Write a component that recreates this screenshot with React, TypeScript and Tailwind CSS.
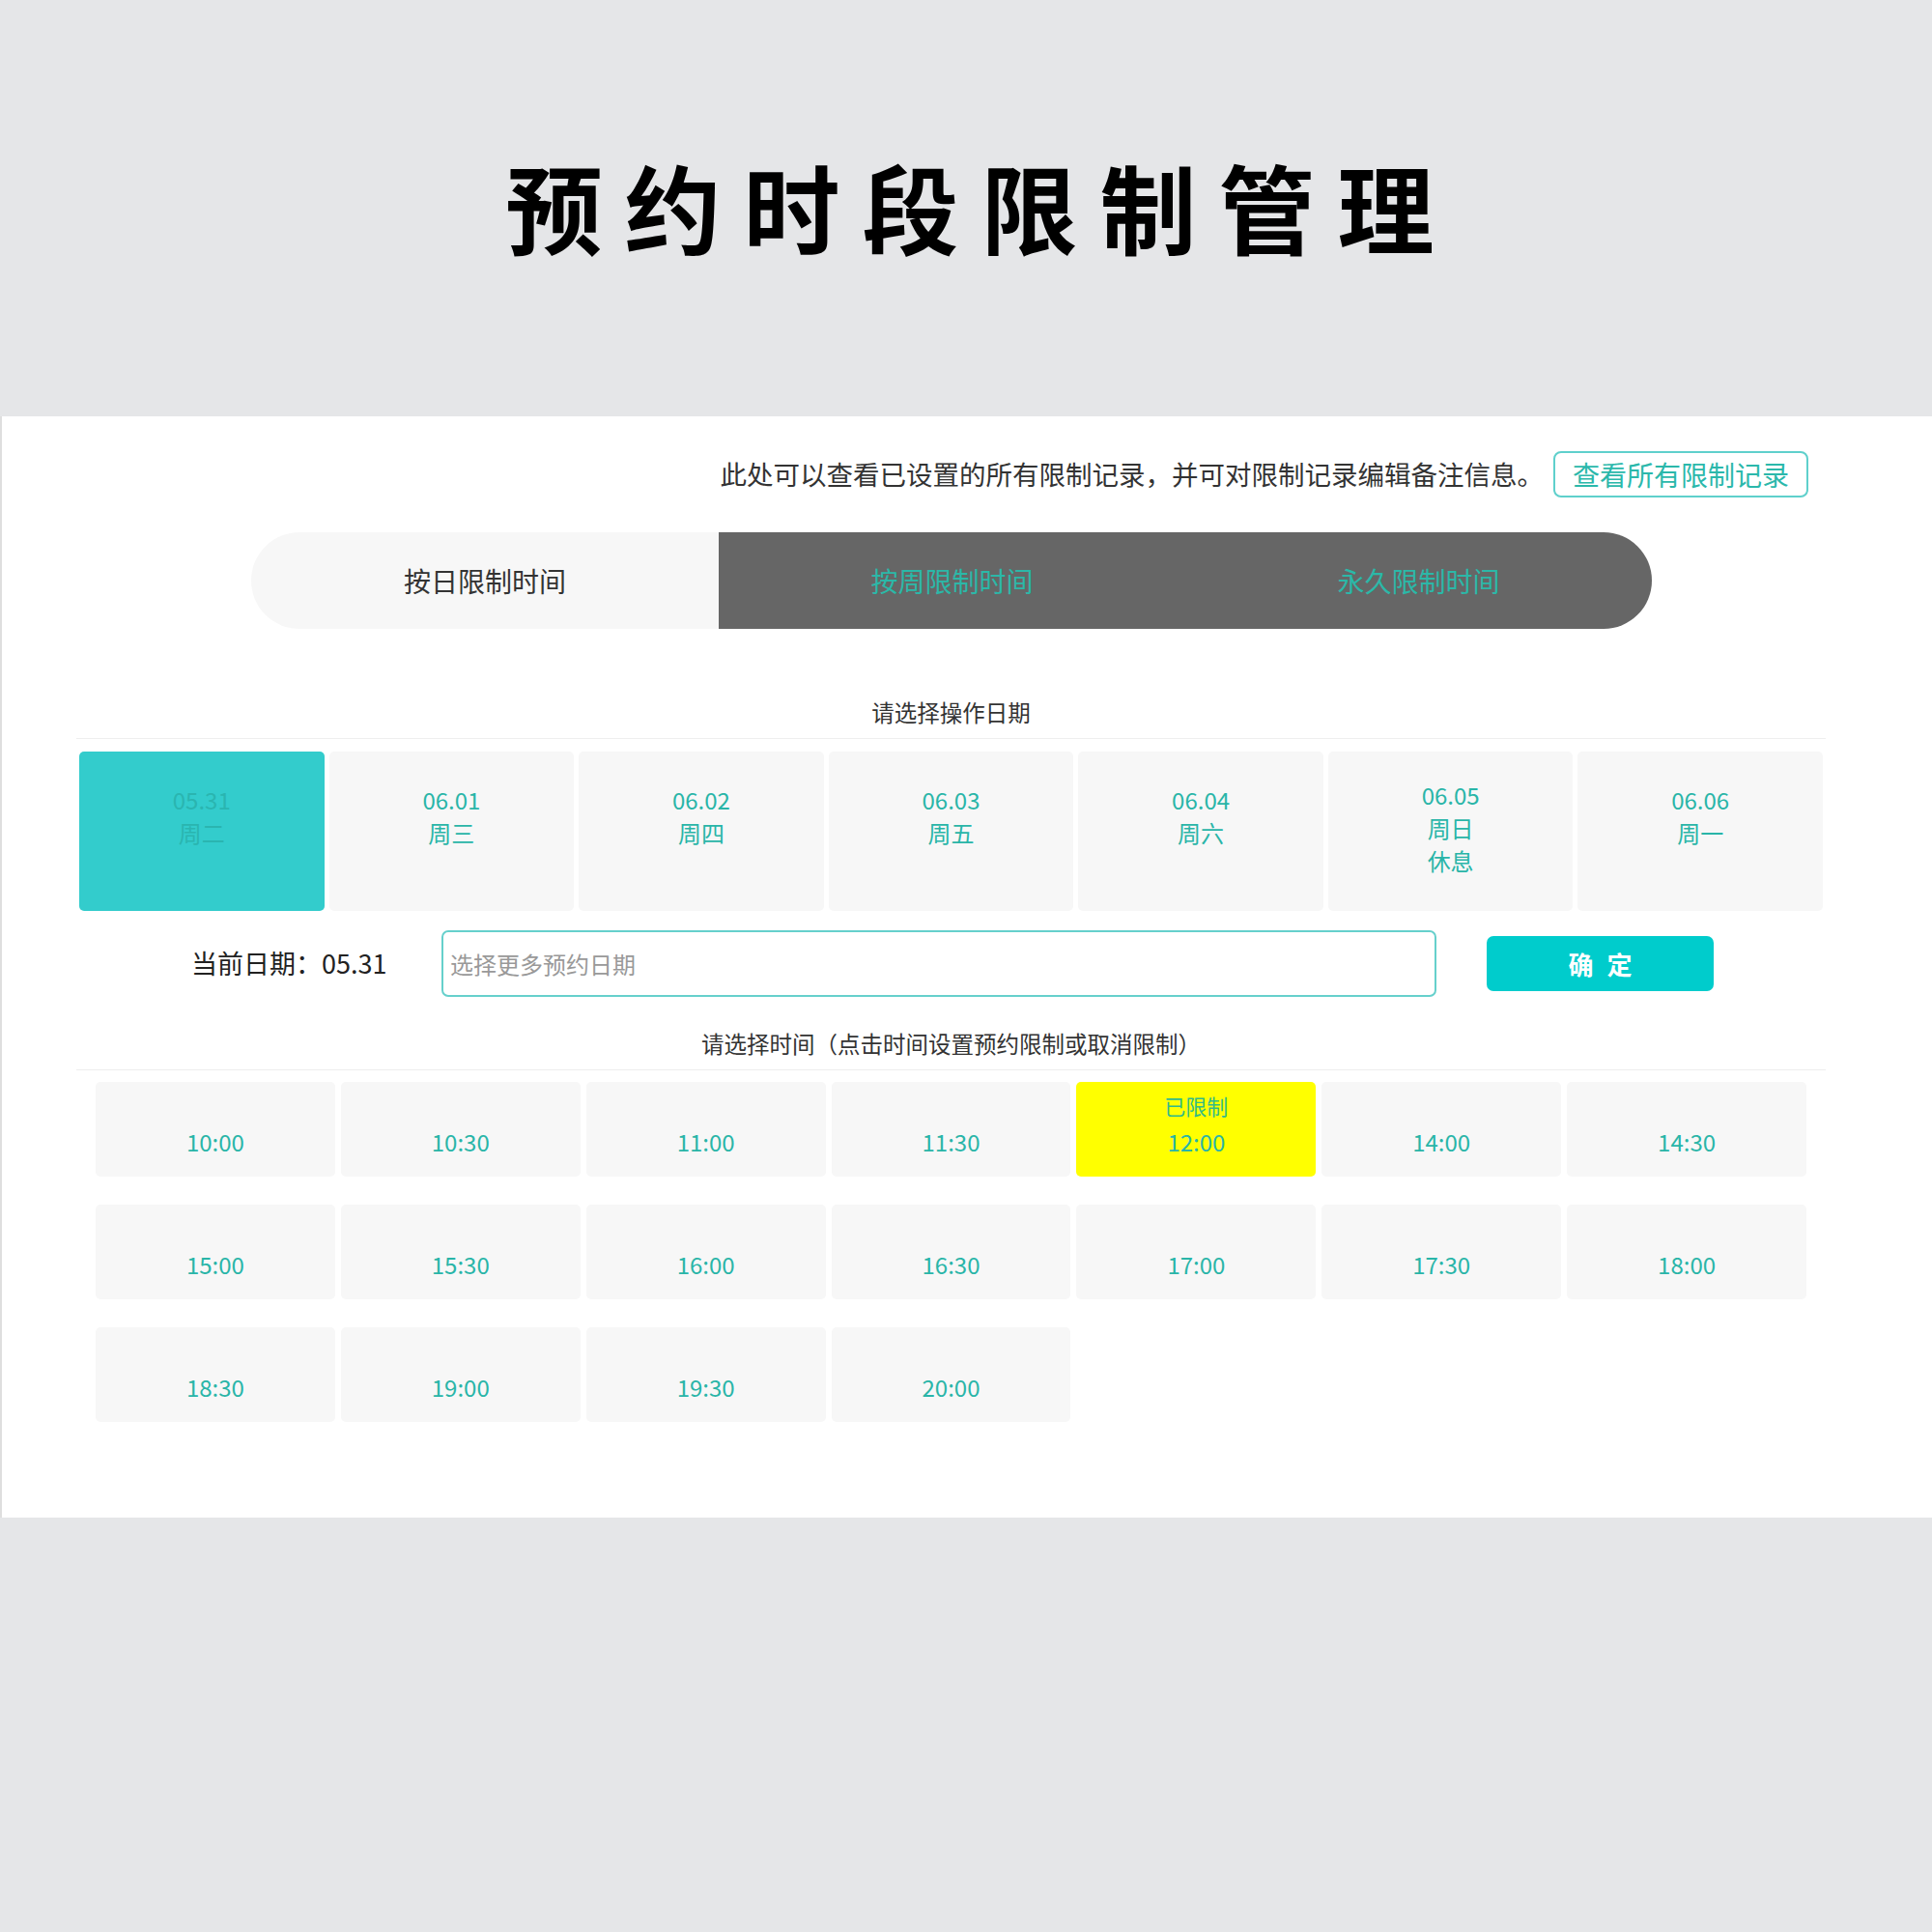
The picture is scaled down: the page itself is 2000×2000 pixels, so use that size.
import React from 'react';

const dates = [
  { d: '05.31', w: '周二', active: true },
  { d: '06.01', w: '周三' },
  { d: '06.02', w: '周四' },
  { d: '06.03', w: '周五' },
  { d: '06.04', w: '周六' },
  { d: '06.05', w: '周日', note: '休息' },
  { d: '06.06', w: '周一' },
];

const times = [
  '10:00', '10:30', '11:00', '11:30', '12:00', '14:00', '14:30',
  '15:00', '15:30', '16:00', '16:30', '17:00', '17:30', '18:00',
  '18:30', '19:00', '19:30', '20:00',
];

const limited = ['12:00'];

export default function App() {
  return (
    <div className="w-[2000px] h-[2000px] bg-[#e5e6e8] font-['Noto_Sans_CJK_SC','Noto_Sans',sans-serif]">
      {/* header */}
      <div className="h-[431px] flex items-center justify-center pb-[6px]">
        <h1 className="text-[100px] leading-none font-bold text-black tracking-[23px] pl-[31px]">
          预约时段限制管理
        </h1>
      </div>

      {/* panel */}
      <div className="h-[1140px] bg-white border-l-2 border-[#dedede]">
        <div className="flex items-center justify-end pr-[128px] pt-[36px]">
          <span className="text-[27.5px] text-[#333]">
            此处可以查看已设置的所有限制记录，并可对限制记录编辑备注信息。
          </span>
          <button className="ml-[10px] w-[264px] h-[48px] border-2 border-[#5fd0cc] rounded-[8px] text-[28px] leading-none text-[#2bb8ab]">
            查看所有限制记录
          </button>
        </div>

        <div className="ml-[258px] mt-[36px] w-[1450px] h-[100px] flex text-[28px]">
          <div className="w-[484px] bg-[#f7f7f7] rounded-l-full flex items-center justify-center text-[#333]">
            按日限制时间
          </div>
          <div className="flex-1 bg-[#666666] rounded-r-full flex">
            <div className="w-[483px] flex items-center justify-center text-[#2bb8a8]">按周限制时间</div>
            <div className="w-[483px] flex items-center justify-center text-[#2bb8a8]">永久限制时间</div>
          </div>
        </div>

        <div className="ml-[77px] w-[1811px]">
          <div className="mt-[70px] pb-[11px] border-b border-[#eeeeee] text-center text-[23.5px] leading-[32px] text-[#333]">
            请选择操作日期
          </div>

          <div className="mt-[13px] mx-[3px] grid grid-cols-7 gap-[5px]">
            {dates.map((item) => (
              <div
                key={item.d}
                className={
                  'h-[165px] rounded-[5px] flex flex-col items-center text-[24px] leading-[34px] ' +
                  (item.active ? 'bg-[#33cccc] text-[#2ab5b0]' : 'bg-[#f7f7f7] text-[#29b5a8]') +
                  (item.note ? ' pt-[28px]' : ' pt-[33px]')
                }
              >
                <span>{item.d}</span>
                <span>{item.w}</span>
                {item.note && <span>{item.note}</span>}
              </div>
            ))}
          </div>

          <div className="mt-[20px] flex items-center h-[69px]">
            <div className="w-[378px] pl-[119px] text-[27px] text-[#222]">当前日期：05.31</div>
            <div className="w-[1030px] h-[69px] border-2 border-[#66d0cc] rounded-[7px] flex items-center pl-[7px] text-[24px] text-[#999]">
              选择更多预约日期
            </div>
            <button className="ml-[52px] w-[235px] h-[57px] bg-[#00cccc] rounded-[7px] text-white text-[26px] font-bold tracking-[14px] pl-[14px]">
              确定
            </button>
          </div>

          <div className="mt-[32px] pb-[11px] border-b border-[#eeeeee] text-center text-[23.5px] leading-[32px] text-[#333]">
            请选择时间（点击时间设置预约限制或取消限制）
          </div>

          <div className="mt-[12px] px-[20px] grid grid-cols-7 gap-x-[6px] gap-y-[29px]">
            {times.map((t) => {
              const isLimited = limited.includes(t);
              return (
                <div
                  key={t}
                  className={
                    'h-[98px] rounded-[5px] flex flex-col items-center pt-[6px] leading-[37px] ' +
                    (isLimited ? 'bg-[#ffff00]' : 'bg-[#f7f7f7]')
                  }
                >
                  <span className="text-[22px] text-[#33bb88] h-[37px]">{isLimited ? '已限制' : ''}</span>
                  <span className="text-[24px] text-[#29b5a8]">{t}</span>
                </div>
              );
            })}
          </div>
        </div>
      </div>
    </div>
  );
}
